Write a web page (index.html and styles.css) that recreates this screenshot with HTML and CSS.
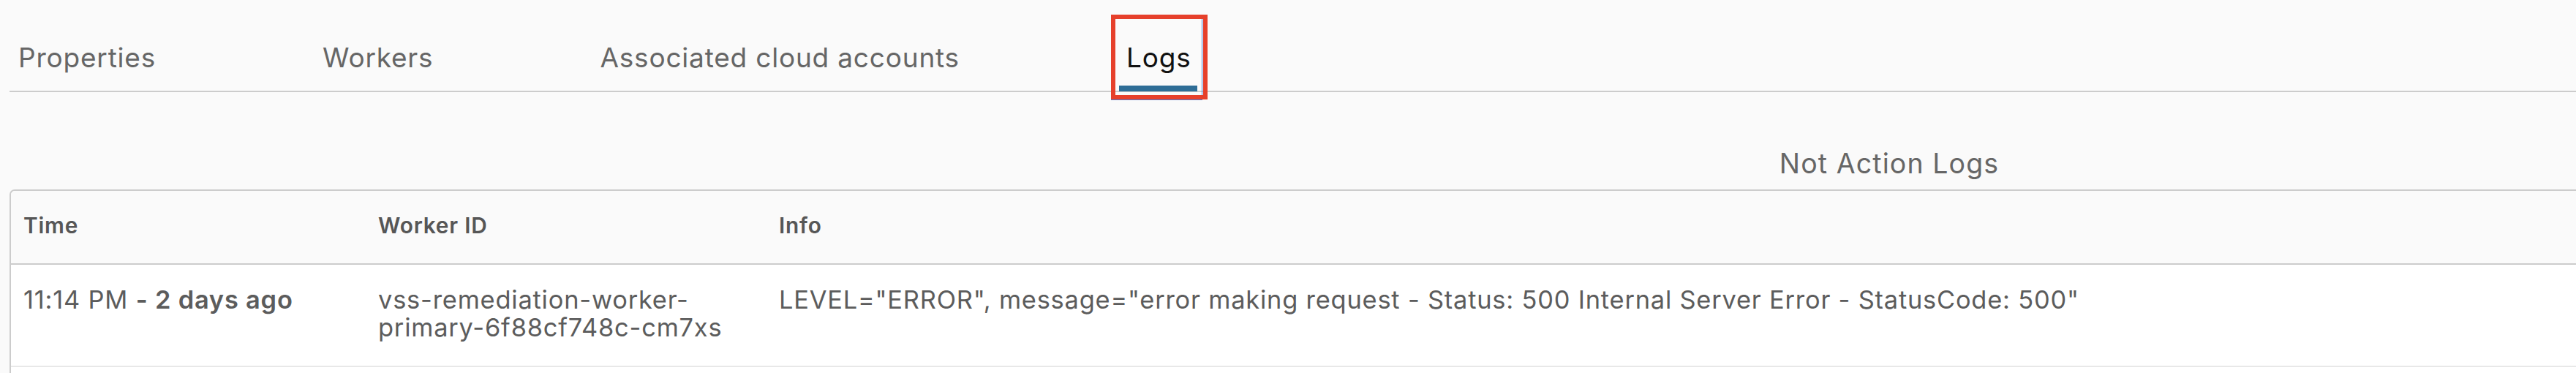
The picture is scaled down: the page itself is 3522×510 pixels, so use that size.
FILE: index.html
```html
<!DOCTYPE html>
<html lang="en">
<head>
<meta charset="utf-8">
<title>Logs</title>
<link rel="stylesheet" href="styles.css">
</head>
<body>
<div class="page">
  <nav class="tabs">
    <div class="tab">Properties</div>
    <div class="tab">Workers</div>
    <div class="tab">Associated cloud accounts</div>
    <div class="tab tab-active">Logs</div>
  </nav>
  <h2 class="title">Not Action Logs</h2>
  <div class="grid">
    <div class="grid-head">
      <div class="cell">Time</div>
      <div class="cell">Worker ID</div>
      <div class="cell">Info</div>
    </div>
    <div class="grid-row">
      <div class="cell">11:14 PM <b>- 2 days ago</b></div>
      <div class="cell">vss-remediation-worker-primary-6f88cf748c-cm7xs</div>
      <div class="cell">LEVEL="ERROR", message="error making request - Status: 500 Internal Server Error - StatusCode: 500"</div>
    </div>
    <div class="grid-foot"></div>
  </div>
</div>
</body>
</html>
```
FILE: styles.css
```css
html, body {
  margin: 0;
  padding: 0;
  overflow: hidden;
  background: #fafafa;
}
body {
  font-family: Inter, Lato, sans-serif;
  color: #5c5c5c;
  letter-spacing: 0.8px;
}
.page {
  width: 5140px;
  padding-left: 13px;
}
.tabs {
  display: flex;
  align-items: flex-end;
  gap: 208px;
  height: 124px;
  padding-left: 2px;
  border-bottom: 2px solid #cccccc;
}
.tab {
  position: relative;
  padding: 0 10px 23px;
  margin-bottom: -1px;
  font-size: 37px;
  line-height: 46px;
  color: #666666;
  white-space: nowrap;
}
.tab-active {
  color: #111111;
  padding-right: 9px;
  box-shadow: inset 0 -8px 0 #2e6d96;
}
.tab-active::before {
  content: "";
  position: absolute;
  left: -11px;
  right: -7px;
  top: -31px;
  bottom: -12px;
  border: 1.5px solid #4b7fd8;
}
.tab-active::after {
  content: "";
  position: absolute;
  left: -11px;
  right: -14px;
  top: -36px;
  bottom: -11px;
  border: 6px solid #e6402b;
}
.title {
  margin: 76px 0 13px;
  font-size: 37.5px;
  line-height: 44px;
  letter-spacing: 1.1px;
  font-weight: 400;
  text-align: center;
  color: #666666;
}
.grid {
  border: 2px solid #cccccc;
  border-radius: 7px 7px 0 0;
  background: #ffffff;
}
.grid-head, .grid-row {
  display: grid;
  grid-template-columns: 485px 548px 1fr;
}
.grid-head {
  background: #fafafa;
  border-bottom: 2px solid #cccccc;
  border-radius: 6px 6px 0 0;
}
.grid-head .cell {
  padding: 29px 17px 34px;
  font-size: 29.8px;
  line-height: 36px;
  font-weight: 600;
  color: #565656;
}
.grid-row {
  border-bottom: 2px solid #e8e8e8;
}
.grid-row .cell {
  padding: 29px 17px 33px;
  font-size: 34.4px;
  line-height: 38px;
  color: #5c5c5c;
}
.grid-row b {
  font-weight: 600;
}
.grid-foot {
  height: 60px;
}
```
